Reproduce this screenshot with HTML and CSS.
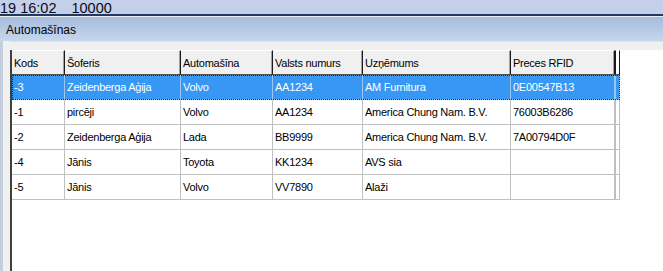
FILE: index.html
```html
<!DOCTYPE html>
<html lang="lv">
<head>
    <meta charset="UTF-8">
    <title>Automašīnas</title>
    <link rel="stylesheet" href="styles.css">
</head>
<body>
    <div class="topbar">
        <span class="clock">19 16:02</span>
        <span class="amount">10000</span>
    </div>

    <div class="window">
        <div class="titlebar">Automašīnas</div>
        <div class="client">
            <div class="frame-left"></div>
            <div class="content">
                <div class="toolstrip"></div>
                <div class="grid">
                    <div class="row header">
                        <div class="cell">Kods</div>
                        <div class="cell">Šoferis</div>
                        <div class="cell">Automašīna</div>
                        <div class="cell">Valsts numurs</div>
                        <div class="cell">Uzņēmums</div>
                        <div class="cell">Preces RFID</div>
                        <div class="cell end"></div>
                    </div>
                    <div class="row selected">
                        <div class="cell">-3</div>
                        <div class="cell">Zeidenberga Aģija</div>
                        <div class="cell">Volvo</div>
                        <div class="cell">AA1234</div>
                        <div class="cell">AM Furnitura</div>
                        <div class="cell">0E00547B13</div>
                        <div class="cell end"></div>
                    </div>
                    <div class="row">
                        <div class="cell">-1</div>
                        <div class="cell">pircēji</div>
                        <div class="cell">Volvo</div>
                        <div class="cell">AA1234</div>
                        <div class="cell">America Chung Nam. B.V.</div>
                        <div class="cell">76003B6286</div>
                        <div class="cell end"></div>
                    </div>
                    <div class="row">
                        <div class="cell">-2</div>
                        <div class="cell">Zeidenberga Aģija</div>
                        <div class="cell">Lada</div>
                        <div class="cell">BB9999</div>
                        <div class="cell">America Chung Nam. B.V.</div>
                        <div class="cell">7A00794D0F</div>
                        <div class="cell end"></div>
                    </div>
                    <div class="row">
                        <div class="cell">-4</div>
                        <div class="cell">Jānis</div>
                        <div class="cell">Toyota</div>
                        <div class="cell">KK1234</div>
                        <div class="cell">AVS sia</div>
                        <div class="cell"></div>
                        <div class="cell end"></div>
                    </div>
                    <div class="row">
                        <div class="cell">-5</div>
                        <div class="cell">Jānis</div>
                        <div class="cell">Volvo</div>
                        <div class="cell">VV7890</div>
                        <div class="cell">Alaži</div>
                        <div class="cell"></div>
                        <div class="cell end"></div>
                    </div>
                </div>
            </div>
        </div>
    </div>
</body>
</html>
```

FILE: styles.css
```css
html, body {
    margin: 0;
    padding: 0;
}
body {
    width: 663px;
    height: 271px;
    overflow: hidden;
    background-color: white;
    font-family: "Liberation Sans", Arial, sans-serif;
    color: #000;
    display: flex;
    flex-direction: column;
}
.topbar {
    height: 13px;
    padding-top: 1px;
    background-color: #c4d0ea;
    border-bottom: 2px solid #23395f;
    font-size: 14.5px;
    line-height: 14px;
    white-space: nowrap;
    color: #0a0a1a;
}
.amount {
    margin-left: 11px;
}
.window {
    flex: 1;
    display: flex;
    flex-direction: column;
    border-top: 1px solid #e8eef8;
}
.titlebar {
    height: 24px;
    line-height: 26px;
    padding-left: 6px;
    font-size: 12px;
    background: linear-gradient(to bottom, #a6bcdc, #c6d6ee);
}
.client {
    flex: 1;
    display: flex;
}
.frame-left {
    width: 3px;
    background-color: #c5cedc;
}
.content {
    flex: 1;
    display: flex;
    flex-direction: column;
    background-color: #f0f0f0;
    padding-left: 7px;
}
.toolstrip {
    height: 8px;
    border-top: 1px solid #e2e2e2;
}
.grid {
    flex: 1;
    background-color: white;
    border-left: 2px solid #404040;
    font-size: 11px;
    letter-spacing: -0.25px;
}
.row {
    display: flex;
    width: fit-content;
    height: 25px;
}
.cell {
    box-sizing: border-box;
    height: 25px;
    line-height: 24px;
    padding-left: 2px;
    border-right: 1px solid #c0c0c0;
    border-bottom: 1px solid #c0c0c0;
    white-space: nowrap;
    overflow: hidden;
}
.cell:nth-child(1) { width: 53px; }
.cell:nth-child(2) { width: 116px; }
.cell:nth-child(3) { width: 92px; }
.cell:nth-child(4) { width: 90px; }
.cell:nth-child(5) { width: 148px; }
.cell:nth-child(6) { width: 104px; }
.cell.end {
    width: 5px;
    padding: 0;
    border-left: 1px solid #c0c0c0;
}
.header .cell {
    background-color: #f0f0f0;
    border-top: 1px solid #ffffff;
    border-right: 1px solid #1a1a1a;
    border-bottom: 1px solid #505050;
    box-shadow: inset -1px 0 0 #a0a0a0;
}
.header .cell.end {
    border-left: 1px solid #1a1a1a;
    border-right: 1px solid #1a1a1a;
    background-color: white;
    box-shadow: none;
}
.selected {
    outline: 1px dotted #202020;
    outline-offset: -1px;
}
.selected .cell {
    background-color: #3797f5;
    color: white;
    border-right-color: #9cc6f2;
}
.selected .cell.end {
    border-left-color: #9cc6f2;
}
```
